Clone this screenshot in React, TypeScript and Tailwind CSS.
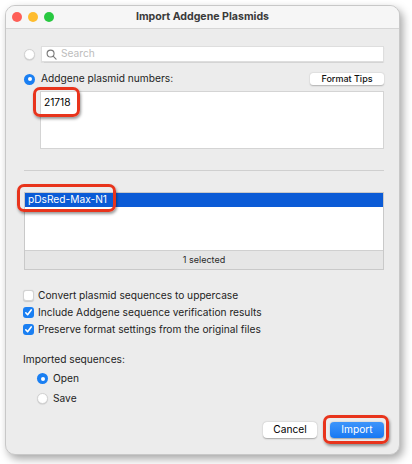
import React from "react";

// Small macOS-style controls
function Radio({ checked }: { checked?: boolean }) {
    if (checked) {
        return (
            <span className="flex h-[11px] w-[11px] shrink-0 items-center justify-center rounded-full bg-[#1a7ff2]">
                <span className="h-[4px] w-[4px] rounded-full bg-white"></span>
            </span>
        );
    }
    return <span className="h-[11px] w-[11px] shrink-0 rounded-full border border-[#d2d2d2] bg-white shadow-[0_0.5px_1px_rgba(0,0,0,0.15)]"></span>;
}

function Checkbox({ checked }: { checked?: boolean }) {
    if (checked) {
        return (
            <span className="flex h-[11px] w-[11px] shrink-0 items-center justify-center rounded-[3px] bg-[#1a7ff2]">
                <svg className="h-[9px] w-[9px]" viewBox="0 0 10 10" fill="none" stroke="white" strokeWidth="1.8" strokeLinecap="round" strokeLinejoin="round">
                    <path d="M2 5.3l2 2.2L8 2.2" />
                </svg>
            </span>
        );
    }
    return <span className="h-[11px] w-[11px] shrink-0 rounded-[3px] border border-[#d2d2d2] bg-white shadow-[0_0.5px_1px_rgba(0,0,0,0.15)]"></span>;
}

// Red callout drawn over the dialog
function Callout({ className }: { className: string }) {
    return <div className={"pointer-events-none absolute rounded-[7px] border-[3px] border-[#e8341c] shadow-[1px_2px_3px_rgba(0,0,0,0.4)] " + className}></div>;
}

export default function App() {
    return (
        <div className="relative h-[464px] w-[412px] bg-white font-['Inter','Liberation_Sans',sans-serif] text-[10.2px] text-[#232323]">
            <div className="ml-[5px] pt-[5px]">
                <div className="flex h-[450px] w-[395px] flex-col overflow-hidden rounded-[10px] border border-[#c8c8c8] bg-[#ececec] shadow-[3px_4px_9px_rgba(0,0,0,0.35)]">
                    {/* title bar */}
                    <div className="relative flex h-[23px] shrink-0 items-center border-b border-[#d6d6d6] bg-[#f6f6f6] pl-[6px]">
                        <div className="flex gap-[6px]">
                            <span className="h-[10px] w-[10px] rounded-full bg-[#fe5f57]"></span>
                            <span className="h-[10px] w-[10px] rounded-full bg-[#febc2e]"></span>
                            <span className="h-[10px] w-[10px] rounded-full bg-[#28c840]"></span>
                        </div>
                        <div className="absolute inset-0 flex items-center justify-center text-[10.6px] font-bold text-[#3a3a3a]">Import Addgene Plasmids</div>
                    </div>

                    <div className="flex flex-1 flex-col pl-[17px] pr-[15px]">
                        {/* search row */}
                        <div className="mt-[17px] flex h-[16px] items-center gap-[6px] pl-[1px]">
                            <Radio />
                            <div className="flex h-[16px] flex-1 items-center gap-[4px] border border-[#dedede] bg-white pl-[4px] shadow-[0_0.5px_1px_rgba(0,0,0,0.1)]">
                                <svg className="h-[11px] w-[11px]" viewBox="0 0 12 12" fill="none" stroke="#7a7a7a" strokeWidth="1.2" strokeLinecap="round">
                                    <circle cx="5" cy="5" r="3.8" />
                                    <path d="M7.8 7.8L11 11" />
                                </svg>
                                <span className="text-[10.2px] text-[#bcbcbc]">Search</span>
                            </div>
                        </div>

                        {/* plasmid numbers */}
                        <div className="mt-[11px] flex h-[12px] items-center gap-[6px] pl-[1px]">
                            <Radio checked />
                            <span className="flex-1">Addgene plasmid numbers:</span>
                            <button className="flex h-[12px] w-[74px] items-center justify-center rounded-[3px] bg-white text-[9px] font-medium text-[#111] shadow-[0_0.5px_1.5px_rgba(0,0,0,0.25)]">Format Tips</button>
                        </div>
                        <div className="ml-[17px] mt-[6px] h-[58px] border border-[#d4d4d4] bg-white px-[3px] pt-[3px] text-[10.2px] text-black">21718</div>

                        <div className="mt-[21px] ml-[1px] h-px bg-[#cfcfcf]"></div>

                        {/* result list */}
                        <div className="mt-[21px] ml-[1px] flex h-[78px] flex-col border border-[#c9c9c9] bg-white">
                            <div className="flex h-[14px] items-center bg-[#0b5bd6] pl-[3px] text-white">pDsRed-Max-N1</div>
                            <div className="flex-1"></div>
                            <div className="flex h-[19px] items-center justify-center border-t border-[#d0d0d0] bg-[#e6e6e6] text-[9px] text-[#2a2a2a]">1 selected</div>
                        </div>

                        {/* options */}
                        <div className="mt-[20px] flex flex-col gap-[6px]">
                            <label className="flex h-[11px] items-center gap-[4px]"><Checkbox />Convert plasmid sequences to uppercase</label>
                            <label className="flex h-[11px] items-center gap-[4px]"><Checkbox checked />Include Addgene sequence verification results</label>
                            <label className="flex h-[11px] items-center gap-[4px]"><Checkbox checked />Preserve format settings from the original files</label>
                        </div>

                        <div className="mt-[18px] h-[12px] leading-[12px]">Imported sequences:</div>
                        <div className="mt-[8px] flex flex-col gap-[9px] pl-[14px]">
                            <label className="flex h-[11px] items-center gap-[5px]"><Radio checked />Open</label>
                            <label className="flex h-[11px] items-center gap-[5px]"><Radio />Save</label>
                        </div>

                        {/* dialog buttons */}
                        <div className="mt-[18px] flex justify-end gap-[13px]">
                            <button className="flex h-[16px] w-[54px] items-center justify-center rounded-[4px] bg-white text-black shadow-[0_0.5px_1.5px_rgba(0,0,0,0.3)]">Cancel</button>
                            <button className="flex h-[16px] w-[54px] items-center justify-center rounded-[4px] bg-gradient-to-b from-[#3d95fb] to-[#1678f3] text-white shadow-[0_0.5px_1.5px_rgba(0,0,0,0.3)]">Import</button>
                        </div>
                    </div>
                </div>
            </div>

            <Callout className="left-[33px] top-[87px] h-[30px] w-[47px]" />
            <Callout className="left-[17px] top-[184px] h-[28px] w-[99px]" />
            <Callout className="left-[323px] top-[415px] h-[29px] w-[66px]" />
        </div>
    );
}
